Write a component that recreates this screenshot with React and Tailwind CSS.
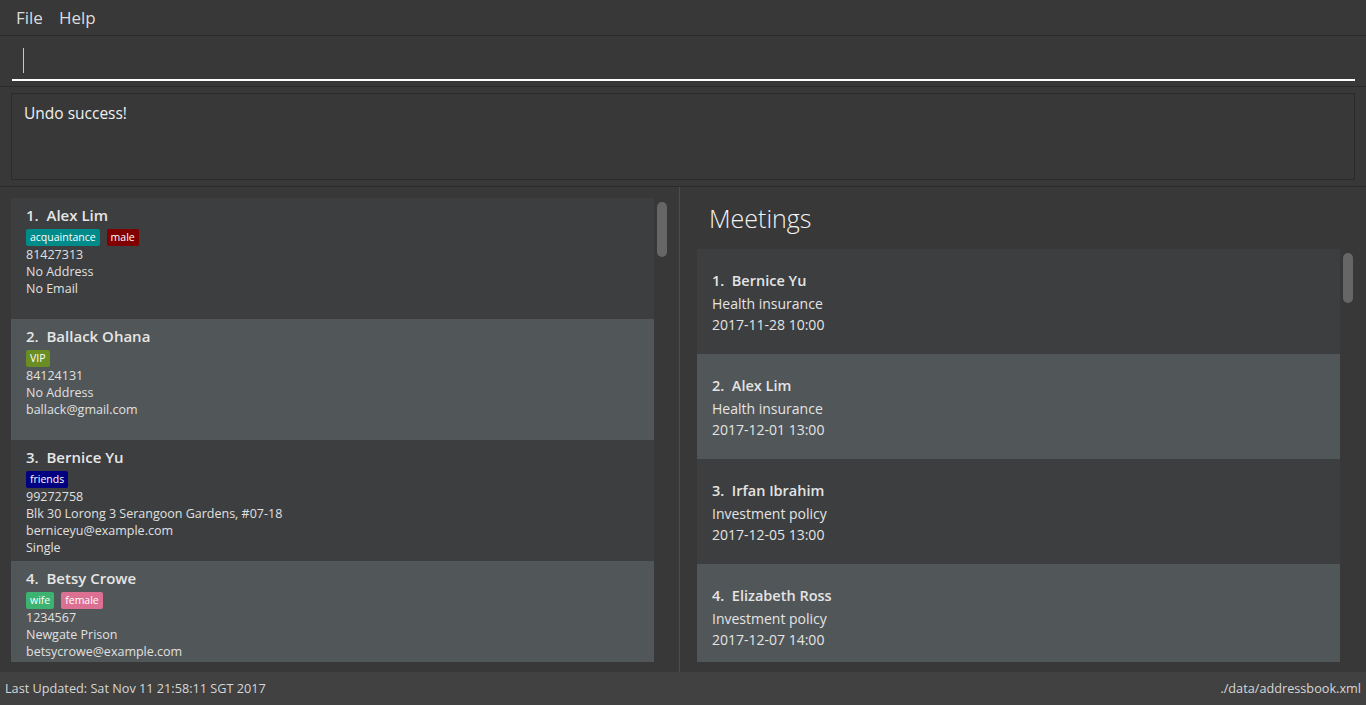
const persons = [
  {
    name: "Alex Lim",
    tags: [
      { label: "acquaintance", color: "bg-[#008b8b]" },
      { label: "male", color: "bg-[#800000]" }
    ],
    lines: ["81427313", "No Address", "No Email"]
  },
  {
    name: "Ballack Ohana",
    tags: [{ label: "VIP", color: "bg-[#6b8e23]" }],
    lines: ["84124131", "No Address", "ballack@gmail.com"]
  },
  {
    name: "Bernice Yu",
    tags: [{ label: "friends", color: "bg-[#000080]" }],
    lines: ["99272758", "Blk 30 Lorong 3 Serangoon Gardens, #07-18", "berniceyu@example.com", "Single"]
  },
  {
    name: "Betsy Crowe",
    tags: [
      { label: "wife", color: "bg-[#3cb371]" },
      { label: "female", color: "bg-[#db7093]" }
    ],
    lines: ["1234567", "Newgate Prison", "betsycrowe@example.com"]
  }
];

const meetings = [
  { name: "Bernice Yu", topic: "Health insurance", time: "2017-11-28 10:00" },
  { name: "Alex Lim", topic: "Health insurance", time: "2017-12-01 13:00" },
  { name: "Irfan Ibrahim", topic: "Investment policy", time: "2017-12-05 13:00" },
  { name: "Elizabeth Ross", topic: "Investment policy", time: "2017-12-07 14:00" }
];

function PersonCard({ person, index }) {
  const shade = index % 2 === 0 ? "bg-[#3c3e3f]" : "bg-[#515658]";
  return (
    <div className={`h-[121px] shrink-0 px-[15px] pt-[5px] ${shade}`}>
      <p className="h-[23px] text-[15px] font-semibold leading-[24px] text-[#e6e6e6]">
        {index + 1}.&nbsp;&nbsp;{person.name}
      </p>
      <div className="mt-[3px] flex h-[17px] gap-[7px]">
        {person.tags.map((tag) => (
          <span
            key={tag.label}
            className={`rounded-[2px] px-[4px] text-[10.5px] leading-[17px] text-white ${tag.color}`}
          >
            {tag.label}
          </span>
        ))}
      </div>
      <div>
        {person.lines.map((line) => (
          <p key={line} className="text-[12.5px] leading-[17px] text-[#e0e0e0]">
            {line}
          </p>
        ))}
      </div>
    </div>
  );
}

function MeetingCard({ meeting, index }) {
  const shade = index % 2 === 0 ? "bg-[#3c3e3f]" : "bg-[#515658]";
  return (
    <div className={`h-[105px] shrink-0 px-[15px] pt-[20px] ${shade}`}>
      <p className="text-[14.5px] font-semibold leading-[24px] text-[#e4e4e4]">
        {index + 1}.&nbsp;&nbsp;{meeting.name}
      </p>
      <p className="text-[14px] leading-[21px] text-[#e4e4e4]">{meeting.topic}</p>
      <p className="text-[14px] leading-[21px] text-[#e4e4e4]">{meeting.time}</p>
    </div>
  );
}

export default function App() {
  return (
    <div
      className="flex h-[705px] w-[1366px] flex-col overflow-hidden bg-[#383838]"
      style={{ fontFamily: '"Open Sans", "Noto Sans", sans-serif' }}
    >
      <div className="flex h-[35px] shrink-0 items-center gap-[16px] px-[16px] text-[17px] text-[#dcdcdc]">
        <span>File</span>
        <span>Help</span>
      </div>

      <div className="h-[52px] shrink-0 border-y border-[#2b2b2b] pl-[12px] pr-[11px] pt-[12px]">
        <div className="h-[33px] border-b-2 border-white pl-[11px]">
          <div className="h-[25px] w-px bg-[#c8c8c8]" />
        </div>
      </div>

      <div className="h-[100px] shrink-0 border-b border-[#2b2b2b] px-[11px] pb-[6px] pt-[6px]">
        <div className="h-full border border-[#2b2b2b] px-[12px] pt-[8px] text-[15.5px] text-[#f0f0f0]">
          Undo success!
        </div>
      </div>

      <div className="flex min-h-0 flex-1">
        <div className="flex w-[679px] shrink-0 pb-[10px] pl-[11px] pt-[11px]">
          <div className="flex w-[643px] flex-col overflow-hidden">
            {persons.map((person, index) => (
              <PersonCard key={person.name} person={person} index={index} />
            ))}
          </div>
          <div className="ml-[3px] pt-[4px]">
            <div className="h-[55px] w-[10px] rounded-[5px] bg-[#666666]" />
          </div>
        </div>

        <div className="w-px shrink-0 bg-[#4c4c4c]" />

        <div className="flex min-w-0 flex-1 flex-col pl-[17px] pr-[13px]">
          <h2 className="h-[62px] shrink-0 pl-[12px] pt-[12px] text-[25px] font-light leading-[38px] text-[#f2f2f2]">
            Meetings
          </h2>
          <div className="flex min-h-0 flex-1 pb-[10px]">
            <div className="flex w-[643px] flex-col overflow-hidden">
              {meetings.map((meeting, index) => (
                <MeetingCard key={meeting.name} meeting={meeting} index={index} />
              ))}
            </div>
            <div className="ml-[3px] pt-[4px]">
              <div className="h-[50px] w-[10px] rounded-[5px] bg-[#666666]" />
            </div>
          </div>
        </div>
      </div>

      <div className="flex h-[33px] shrink-0 items-center justify-between bg-[#414141] pl-[5px] pr-[5px] text-[12.7px] text-[#d6d6d6]">
        <span>Last Updated: Sat Nov 11 21:58:11 SGT 2017</span>
        <span>./data/addressbook.xml</span>
      </div>
    </div>
  );
}
